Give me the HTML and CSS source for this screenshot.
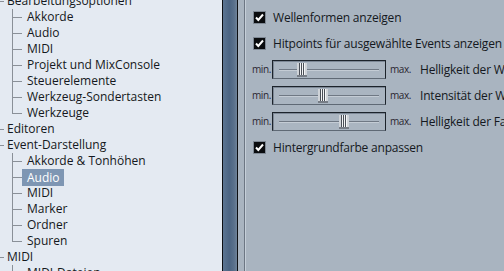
FILE: index.html
```html
<!DOCTYPE html>
<html lang="de">
<head>
    <meta charset="UTF-8">
    <title>Voreinstellungen</title>
    <link rel="stylesheet" href="styles.css">
</head>
<body>
    <div class="tree">
        <div class="row top"><span class="tick"></span><span class="label">Bearbeitungsoptionen</span></div>
        <div class="row"><span class="twig"></span><span class="label">Akkorde</span></div>
        <div class="row"><span class="twig"></span><span class="label">Audio</span></div>
        <div class="row"><span class="twig"></span><span class="label">MIDI</span></div>
        <div class="row"><span class="twig"></span><span class="label">Projekt und MixConsole</span></div>
        <div class="row"><span class="twig"></span><span class="label">Steuerelemente</span></div>
        <div class="row"><span class="twig"></span><span class="label">Werkzeug-Sondertasten</span></div>
        <div class="row"><span class="twig last"></span><span class="label">Werkzeuge</span></div>
        <div class="row top"><span class="tick"></span><span class="label">Editoren</span></div>
        <div class="row top"><span class="tick"></span><span class="label">Event-Darstellung</span></div>
        <div class="row"><span class="twig"></span><span class="label">Akkorde &amp; Tonhöhen</span></div>
        <div class="row"><span class="twig"></span><span class="label selected">Audio</span></div>
        <div class="row"><span class="twig"></span><span class="label">MIDI</span></div>
        <div class="row"><span class="twig"></span><span class="label">Marker</span></div>
        <div class="row"><span class="twig"></span><span class="label">Ordner</span></div>
        <div class="row"><span class="twig last"></span><span class="label">Spuren</span></div>
        <div class="row top"><span class="tick"></span><span class="label">MIDI</span></div>
        <div class="row"><span class="twig"></span><span class="label">MIDI-Dateien</span></div>
    </div>

    <div class="splitter"></div>

    <div class="panel">
        <div class="group">
            <div class="option">
                <span class="check"><svg viewBox="0 0 11 11"><path d="M2 5.5 L4.3 8 L9 2.5" /></svg></span>
                <span class="text">Wellenformen anzeigen</span>
            </div>
            <div class="option">
                <span class="check"><svg viewBox="0 0 11 11"><path d="M2 5.5 L4.3 8 L9 2.5" /></svg></span>
                <span class="text">Hitpoints für ausgewählte Events anzeigen</span>
            </div>
            <div class="option">
                <span class="min">min.</span>
                <div class="slider"><span class="thumb" style="margin-left: 24px"></span></div>
                <span class="max">max.</span>
                <span class="text">Helligkeit der Wellenformen</span>
            </div>
            <div class="option">
                <span class="min">min.</span>
                <div class="slider"><span class="thumb" style="margin-left: 45px"></span></div>
                <span class="max">max.</span>
                <span class="text">Intensität der Wellenform-Umrisse</span>
            </div>
            <div class="option">
                <span class="min">min.</span>
                <div class="slider"><span class="thumb" style="margin-left: 66px"></span></div>
                <span class="max">max.</span>
                <span class="text">Helligkeit der Fades</span>
            </div>
            <div class="option">
                <span class="check"><svg viewBox="0 0 11 11"><path d="M2 5.5 L4.3 8 L9 2.5" /></svg></span>
                <span class="text">Hintergrundfarbe anpassen</span>
            </div>
        </div>
    </div>
</body>
</html>
```

FILE: styles.css
```css
html, body {
    margin: 0;
    height: 100%;
    overflow: hidden;
}
body {
    display: flex;
    font-family: 'Open Sans', 'Noto Sans', sans-serif;
    color: #141820;
    background-color: #aab5c1;
}

/* tree on the left */
.tree {
    width: 222px;
    flex: none;
    background-color: #e4eaf2;
    border-right: 1px solid #0c0f13;
    font-size: 12px;
    overflow: hidden;
}
.tree .row:first-child {
    margin-top: -7px;
}
.row {
    display: flex;
    align-items: center;
    height: 16px;
    white-space: nowrap;
}
.tick {
    width: 4px;
    height: 16px;
    margin-right: 2px;
    background: linear-gradient(#8a9098, #8a9098) left 8px / 4px 1px no-repeat;
}
.twig {
    width: 10px;
    height: 16px;
    margin-left: 12px;
    background:
        linear-gradient(#8a9098, #8a9098) left top / 1px 100% no-repeat,
        linear-gradient(#8a9098, #8a9098) left 8px / 10px 1px no-repeat;
}
.twig.last {
    background:
        linear-gradient(#8a9098, #8a9098) left top / 1px 9px no-repeat,
        linear-gradient(#8a9098, #8a9098) left 8px / 10px 1px no-repeat;
}
.label {
    line-height: 16px;
    padding: 0 4px 0 1px;
}
.twig + .label {
    padding-left: 5px;
}
.label.selected {
    background-color: #7e96b3;
    color: #fff;
    line-height: 17px;
}

/* splitter */
.splitter {
    width: 14px;
    flex: none;
    background: linear-gradient(to right, #5c7592, #4b6482 45%, #5a718c 80%, #6f8399);
    border-right: 1px solid #0c0f13;
}

/* settings panel */
.panel {
    flex: 1;
    min-width: 0;
    padding-left: 6px;
    background-color: #a9b4c0;
}
.group {
    height: 100%;
    border-left: 1px solid #6c7683;
    box-shadow: inset 1px 0 0 #c6cfd9;
    padding: 4px 0 0 8px;
    font-size: 12px;
    letter-spacing: -0.2px;
    overflow: hidden;
}
.option {
    display: flex;
    align-items: center;
    height: 26px;
    white-space: nowrap;
}
.check {
    width: 11px;
    height: 11px;
    flex: none;
    background-color: #0a0c0f;
    border: 1px solid #7e8894;
    margin-right: 7px;
    display: flex;
}
.check svg {
    width: 11px;
    height: 11px;
    fill: none;
    stroke: #fff;
    stroke-width: 2;
}
.min, .max {
    flex: none;
    font-size: 10px;
    letter-spacing: -0.4px;
    color: #2a2630;
}
.min {
    width: 19px;
    margin-left: -1px;
    margin-right: 1px;
}
.max {
    width: 30px;
    margin-left: 4px;
}
.slider {
    width: 112px;
    height: 17px;
    flex: none;
    display: flex;
    align-items: center;
    border: 1px solid #1c232b;
    border-bottom-color: #5f6975;
    box-shadow: inset 1px 1px 0 #7d8896;
    background:
        linear-gradient(#6f7884, #6f7884) 6px 8px / 100px 1px no-repeat,
        linear-gradient(#c4ccd5, #c4ccd5) 6px 9px / 100px 1px no-repeat,
        #aab5c1;
}
.thumb {
    width: 10px;
    height: 12px;
    margin-top: 1px;
    border-bottom: 2px solid #777d86;
    background: linear-gradient(to right,
        #cfd3d8 0 2px, #4a4f57 2px 3px, #f4f5f6 3px 4px, #4a4f57 4px 5px,
        #f4f5f6 5px 6px, #4a4f57 6px 7px, #f4f5f6 7px 8px, #cfd3d8 8px);
}
```
